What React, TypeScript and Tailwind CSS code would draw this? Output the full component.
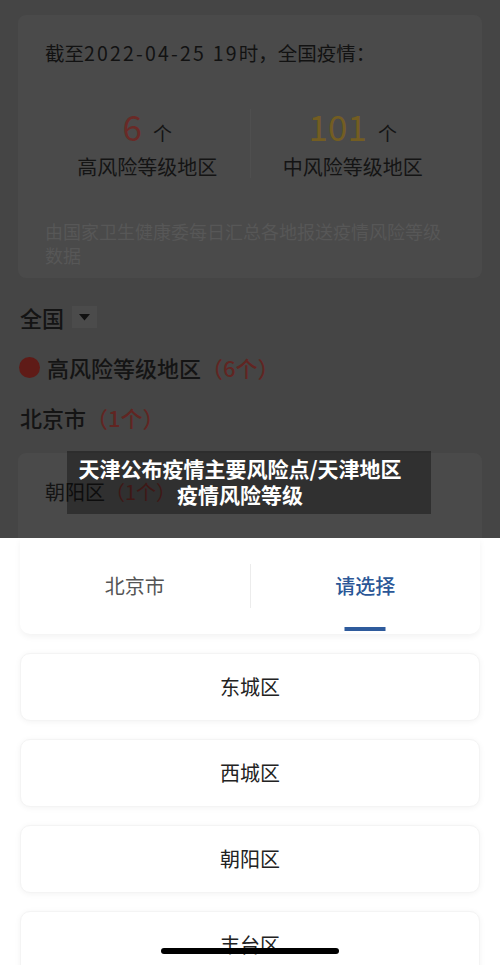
export default function App() {
  const districts = ["东城区", "西城区", "朝阳区", "丰台区"];

  return (
    <div className="relative h-[965px] w-[500px] overflow-hidden bg-white font-['Noto_Sans_CJK_SC',sans-serif] text-[#141414]">
      {/* dimmed page behind the sheet */}
      <div className="relative h-[538px] overflow-hidden bg-[#454545]">
        <div className="px-[18px] pt-[15px]">
          <div className="h-[263px] rounded-lg bg-[#4a4a4a] px-[27px] pt-[24px]">
            <p className="text-[19.5px] leading-[28px] text-[#121212]">
              截至<span className="tracking-[2.2px]">2022-04-25 19</span>时，全国疫情：
            </p>
            <div className="mt-[39px] flex">
              <div className="flex flex-1 flex-col items-center">
                <div className="flex items-baseline">
                  <span className="text-[35px] leading-[40px] text-[#692a27]">6</span>
                  <span className="ml-[11px] text-[19px] leading-[40px]">个</span>
                </div>
                <span className="text-[20px] leading-[28px]">高风险等级地区</span>
              </div>
              <div className="my-[3px] w-px bg-[#4f4f4f]" />
              <div className="flex flex-1 flex-col items-center">
                <div className="flex items-baseline">
                  <span className="text-[35px] leading-[40px] text-[#735d22]">101</span>
                  <span className="ml-[11px] text-[19px] leading-[40px]">个</span>
                </div>
                <span className="text-[20px] leading-[28px]">中风险等级地区</span>
              </div>
            </div>
            <p className="mt-[38px] text-[18px] leading-[24px] text-[#575757]">
              由国家卫生健康委每日汇总各地报送疫情风险等级数据
            </p>
          </div>
        </div>

        <div className="mt-[24px] flex items-center px-[20px]">
          <span className="text-[22px] font-medium leading-[30px]">全国</span>
          <span className="ml-[8px] flex h-[22px] w-[25px] items-center justify-center bg-[#4b4b4b]">
            <svg width="11" height="7" viewBox="0 0 11 7">
              <polygon points="0,0 11,0 5.5,6.5" fill="#111" />
            </svg>
          </span>
        </div>

        <div className="mt-[20px] flex items-center px-[19px]">
          <span className="h-[21px] w-[21px] rounded-full bg-[#5f1b17]" />
          <span className="ml-[7px] text-[22px] font-medium leading-[30px]">高风险等级地区</span>
          <span className="text-[22px] font-medium leading-[30px] text-[#612522]">（6个）</span>
        </div>

        <div className="mt-[20px] flex items-center px-[20px]">
          <span className="text-[22px] font-medium leading-[30px]">北京市</span>
          <span className="text-[22px] font-medium leading-[30px] text-[#612522]">（1个）</span>
        </div>

        <div className="mx-[18px] mt-[21px] h-[120px] rounded-lg bg-[#4a4a4a] px-[27px] pt-[25px]">
          <span className="text-[20px] leading-[28px]">朝阳区</span>
          <span className="text-[20px] leading-[28px] text-[#612522]">（1个）</span>
        </div>

        {/* video caption */}
        <div className="absolute left-[67px] top-[451px] h-[63px] w-[364px] bg-black/35 pr-[18px] pt-[4px] text-center text-[21px] font-bold leading-[26px] whitespace-nowrap text-white">
          天津公布疫情主要风险点/天津地区
          <br />
          疫情风险等级
        </div>
      </div>

      {/* bottom sheet */}
      <div className="bg-white">
        <div className="mx-[20px] flex h-[96px] rounded-b-[10px] bg-white shadow-[0_3px_6px_rgba(0,0,0,0.05)]">
          <div className="flex flex-1 items-center justify-center text-[20px] text-[#555]">北京市</div>
          <div className="h-[44px] w-px self-center bg-[#ececec]" />
          <div className="relative flex flex-1 items-center justify-center text-[20px] font-medium text-[#2b5797]">
            请选择
            <span className="absolute bottom-[3px] left-1/2 h-[4px] w-[41px] -translate-x-1/2 bg-[#2f5b9c]" />
          </div>
        </div>

        <div className="mt-[19px] flex flex-col gap-[18px] px-[20px]">
          {districts.map((d) => (
            <div
              key={d}
              className="flex h-[68px] items-center justify-center rounded-[10px] border border-[#f4f4f4] bg-white text-[20px] text-[#222] shadow-[0_1px_6px_rgba(0,0,0,0.05)]"
            >
              {d}
            </div>
          ))}
        </div>
      </div>

      <div className="absolute left-[161px] top-[948px] h-[6px] w-[178px] rounded-full bg-black" />
    </div>
  );
}
